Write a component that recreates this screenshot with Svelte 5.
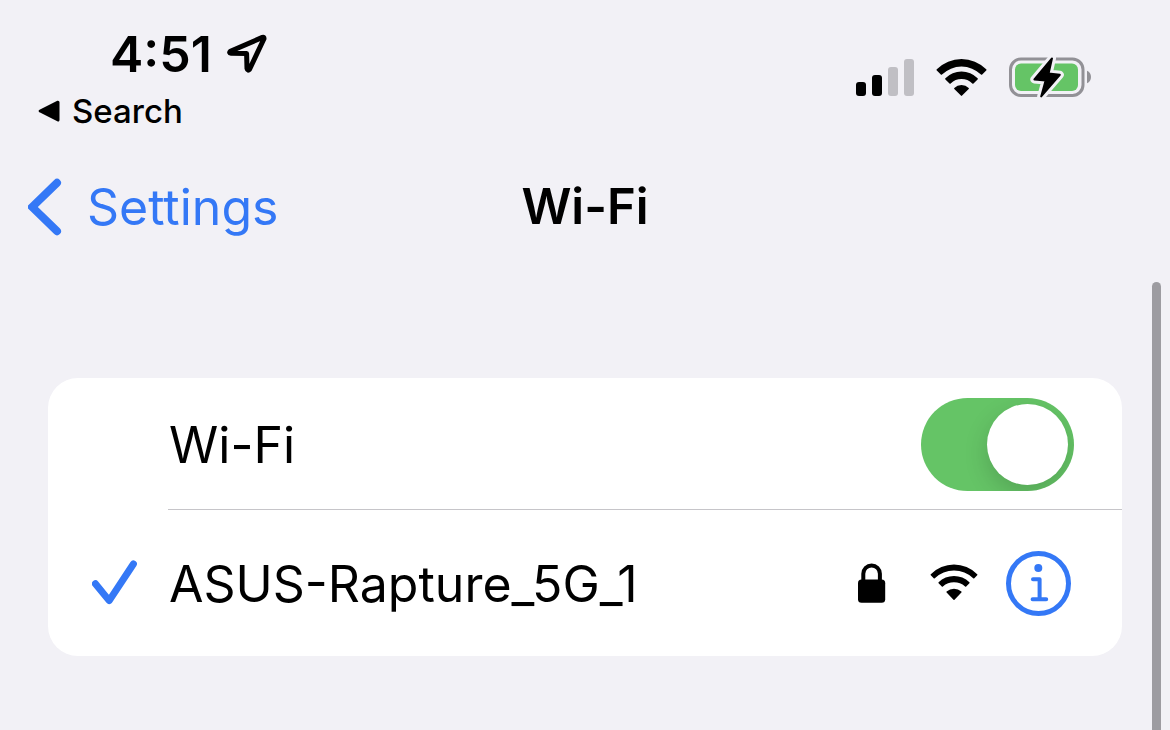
<script lang="ts">
	type Network = {
		name: string;
		secured: boolean;
		connected: boolean;
	};

	const time = '4:51';
	const previousApp = 'Search';

	/** Bars lit out of four. */
	const signal = 2;
	const bars = [14, 21, 29, 37];

	const networks: Network[] = [{ name: 'ASUS-Rapture_5G_1', secured: true, connected: true }];

	let enabled = $state(true);
</script>

<div class="screen">
	<header class="status">
		<div class="status-left">
			<div class="clock">
				<span>{time}</span>
				<svg class="location" width="40" height="40" viewBox="0 0 40 40" aria-hidden="true">
					<path d="M35.4 3.4 L3.4 17.2 Q1.6 19 4 19.2 L19.6 19.6 L20 34.6 Q20.6 37.4 22.6 35.2 L37 4.8 Q37.2 2.8 35.4 3.4 Z" />
				</svg>
			</div>
			<a class="back-to-app" href="#search">
				<svg width="22" height="22" viewBox="0 0 22 22" aria-hidden="true">
					<path d="M20 2.2 L2.2 11 L20 20 Z" />
				</svg>
				{previousApp}
			</a>
		</div>

		<div class="status-right">
			<svg width="58" height="40" viewBox="0 0 58 40" role="img" aria-label="Signal">
				{#each bars as h, i}
					<rect class="bar" class:lit={i < signal} x={i * 16} y={38 - h} width="10" height={h} rx="3" />
				{/each}
			</svg>
			<svg width="51" height="38" viewBox="0 0 51 38" role="img" aria-label="Wi-Fi">
				<path d="M0.8 10.3 A35 35 0 0 1 50.2 10.3 Q50.8 10.9 50.2 11.5 L46.2 15.5 Q45.6 16.1 45 15.5 A28 28 0 0 0 6 15.5 Q5.4 16.1 4.8 15.5 L0.8 11.5 Q0.2 10.9 0.8 10.3 Z" />
				<path d="M9.4 19.2 A22.6 22.6 0 0 1 41.6 19.2 Q42.2 19.8 41.6 20.4 L37.5 24.5 Q36.9 25.1 36.3 24.5 A15.4 15.4 0 0 0 14.7 24.5 Q14.1 25.1 13.5 24.5 L9.4 20.4 Q8.8 19.8 9.4 19.2 Z" />
				<path d="M18.3 29 A10 10 0 0 1 32.7 29 Q33.2 29.5 32.7 30 L26.1 36.6 Q25.5 37.2 24.9 36.6 L18.3 30 Q17.8 29.5 18.3 29 Z" />
			</svg>
			<svg width="83" height="42" viewBox="0 0 83 42" role="img" aria-label="Battery charging">
				<rect class="case" x="1.5" y="2" width="72.5" height="36.5" rx="10.5" />
				<rect class="charge" x="6" y="6.5" width="63" height="27.5" rx="6" />
				<path class="nub" d="M78 13.8 Q82 15.6 82 20 Q82 24.4 78 26.2 Z" />
				<path class="bolt-gap" d="M43 1.4 L25.4 22.4 L36.6 23.6 L32.2 39.4 L50.8 17.8 L39.6 16.6 Z" />
				<path class="bolt" d="M43 1.4 L25.4 22.4 L36.6 23.6 L32.2 39.4 L50.8 17.8 L39.6 16.6 Z" />
			</svg>
		</div>
	</header>

	<nav class="nav">
		<a class="back" href="#settings">
			<svg width="34" height="58" viewBox="0 0 34 58" aria-hidden="true">
				<path d="M29 4.8 L4.2 29 L29 53.2" />
			</svg>
			Settings
		</a>
		<h1>Wi-Fi</h1>
	</nav>

	<main class="group">
		<div class="row">
			<label class="name" for="wifi-toggle">Wi-Fi</label>
			<input id="wifi-toggle" class="toggle" type="checkbox" role="switch" bind:checked={enabled} />
		</div>

		{#if enabled}
			{#each networks as network (network.name)}
				<div class="row network">
					<span class="mark">
						{#if network.connected}
							<svg width="46" height="46" viewBox="0 0 46 46" role="img" aria-label="Connected">
								<path d="M3.4 23.8 L17.2 40.6 L41.4 4" />
							</svg>
						{/if}
					</span>
					<span class="name">{network.name}</span>
					{#if network.secured}
						<svg width="28" height="40" viewBox="0 0 28 40" role="img" aria-label="Secured">
							<path class="shackle" d="M5.3 18 V10.8 A8.3 8.4 0 0 1 21.9 10.8 V18" />
							<rect x="0" y="16.6" width="27.2" height="23.2" rx="3.6" />
						</svg>
					{/if}
					<svg class="strength" width="48" height="39" viewBox="0 0 48 39" role="img" aria-label="Signal strength">
						<path d="M0.8 10.2 A32.5 32.5 0 0 1 47.2 10.2 Q47.7 10.8 47.2 11.3 L44.3 14.2 Q43.8 14.7 43.2 14.2 A27.8 27.8 0 0 0 4.8 14.2 Q4.2 14.7 3.7 14.2 L0.8 11.3 Q0.3 10.8 0.8 10.2 Z" />
						<path d="M8.6 18.2 A22 22 0 0 1 39.4 18.2 Q39.9 18.7 39.4 19.2 L36.2 22.4 Q35.7 22.9 35.1 22.4 A17 17 0 0 0 12.9 22.4 Q12.3 22.9 11.8 22.4 L8.6 19.2 Q8.1 18.7 8.6 18.2 Z" />
						<path d="M16.6 27.4 A11.5 11.5 0 0 1 31.4 27.4 Q31.9 27.9 31.4 28.4 L24.5 35.8 Q24 36.3 23.5 35.8 L16.6 28.4 Q16.1 27.9 16.6 27.4 Z" />
					</svg>
					<button class="info" aria-label="Network details">
						<svg width="65" height="65" viewBox="0 0 65 65" aria-hidden="true">
							<circle class="ring" cx="32.5" cy="32.5" r="30" />
							<circle class="dot" cx="32.3" cy="17" r="4" />
							<path class="stem" d="M27 28.2 H33.6 V48.2 M26.6 48.2 H40.2" />
						</svg>
					</button>
				</div>
			{/each}
		{/if}
	</main>

	<div class="scrollbar"></div>
</div>

<style>
	:global(body) {
		background: #f2f1f6;
	}

	.screen {
		position: relative;
		box-sizing: border-box;
		min-height: 100vh;
		overflow: hidden;
		color: #000;
		font-family: Inter, 'Liberation Sans', sans-serif;
		font-size: 50px;
		line-height: 60px;
	}
	svg {
		display: block;
		flex: none;
	}
	a {
		text-decoration: none;
	}

	.status {
		display: flex;
		justify-content: space-between;
		align-items: flex-start;
		padding: 24px 78px 0 38px;
	}
	.clock {
		display: flex;
		align-items: center;
		gap: 15px;
		padding-left: 72px;
		font-weight: 600;
	}
	.location path {
		fill: none;
		stroke: #000;
		stroke-width: 5;
		stroke-linejoin: round;
	}
	.back-to-app {
		display: flex;
		align-items: center;
		gap: 12px;
		margin-top: 7px;
		color: #000;
		font-size: 33px;
		font-weight: 500;
		line-height: 40px;
	}
	.back-to-app path {
		stroke: #000;
		stroke-width: 3;
		stroke-linejoin: round;
	}
	.status-right {
		display: flex;
		align-items: center;
		gap: 22px;
		padding-top: 33px;
	}
	.bar {
		fill: #c0bfc4;
	}
	.bar.lit {
		fill: #000;
	}
	.case {
		fill: none;
		stroke: #929196;
		stroke-width: 3;
	}
	.charge {
		fill: #65c466;
	}
	.nub {
		fill: #929196;
	}
	.bolt-gap {
		fill: #f2f1f6;
		stroke: #f2f1f6;
		stroke-width: 8;
		stroke-linejoin: round;
	}
	.bolt {
		stroke: #000;
		stroke-width: 2;
		stroke-linejoin: round;
	}

	.nav {
		display: grid;
		grid-template-columns: 1fr auto 1fr;
		align-items: center;
		padding: 46px 28px 0;
	}
	.back {
		display: flex;
		align-items: center;
		gap: 25px;
		color: #3478f6;
	}
	.back path {
		fill: none;
		stroke: #3478f6;
		stroke-width: 8;
		stroke-linecap: round;
		stroke-linejoin: miter;
	}
	h1 {
		margin: 0;
		font-size: 49px;
		font-weight: 600;
		line-height: 60px;
	}

	.group {
		margin: 141px 48px 0;
		border-radius: 30px;
		background: #fff;
	}
	.row {
		display: flex;
		align-items: center;
		box-sizing: border-box;
		min-height: 132px;
		margin-left: 120px;
		padding: 2px 48px 0 0;
		border-bottom: 1px solid #c6c5c9;
	}
	.row.network {
		min-height: 146px;
		margin-left: 0;
		padding-top: 0;
		border-bottom: 0;
	}
	.name {
		flex: 1;
		padding-left: 1px;
	}
	.network .name {
		padding-top: 2px;
	}
	.mark {
		box-sizing: border-box;
		width: 120px;
		padding-left: 44px;
	}
	.mark path {
		fill: none;
		stroke: #3478f6;
		stroke-width: 7;
		stroke-linecap: round;
		stroke-linejoin: round;
	}
	.shackle {
		fill: none;
		stroke: #000;
		stroke-width: 4;
	}
	.strength {
		margin: 0 28px 0 44px;
	}
	.info {
		margin-right: 3px;
		padding: 0;
		border: 0;
		background: none;
		cursor: pointer;
	}
	.ring {
		fill: none;
		stroke: #3478f6;
		stroke-width: 5;
	}
	.dot {
		fill: #3478f6;
	}
	.stem {
		fill: none;
		stroke: #3478f6;
		stroke-width: 4;
		stroke-linecap: round;
		stroke-linejoin: round;
	}

	.toggle {
		appearance: none;
		display: flex;
		flex: none;
		box-sizing: border-box;
		width: 153px;
		height: 93px;
		margin: 0;
		padding: 6px;
		border-radius: 47px;
		background: #e9e9eb;
		overflow: hidden;
		cursor: pointer;
	}
	.toggle::before {
		content: '';
		width: 81px;
		height: 81px;
		border-radius: 50%;
		background: #fff;
		box-shadow: 0 9px 24px rgba(0, 0, 0, 0.16);
	}
	.toggle:checked {
		justify-content: flex-end;
		background: #65c466;
	}

	.scrollbar {
		position: absolute;
		top: 282px;
		right: 9px;
		bottom: 0;
		width: 9px;
		border-radius: 5px 5px 0 0;
		background: #9d9ca1;
	}
</style>
